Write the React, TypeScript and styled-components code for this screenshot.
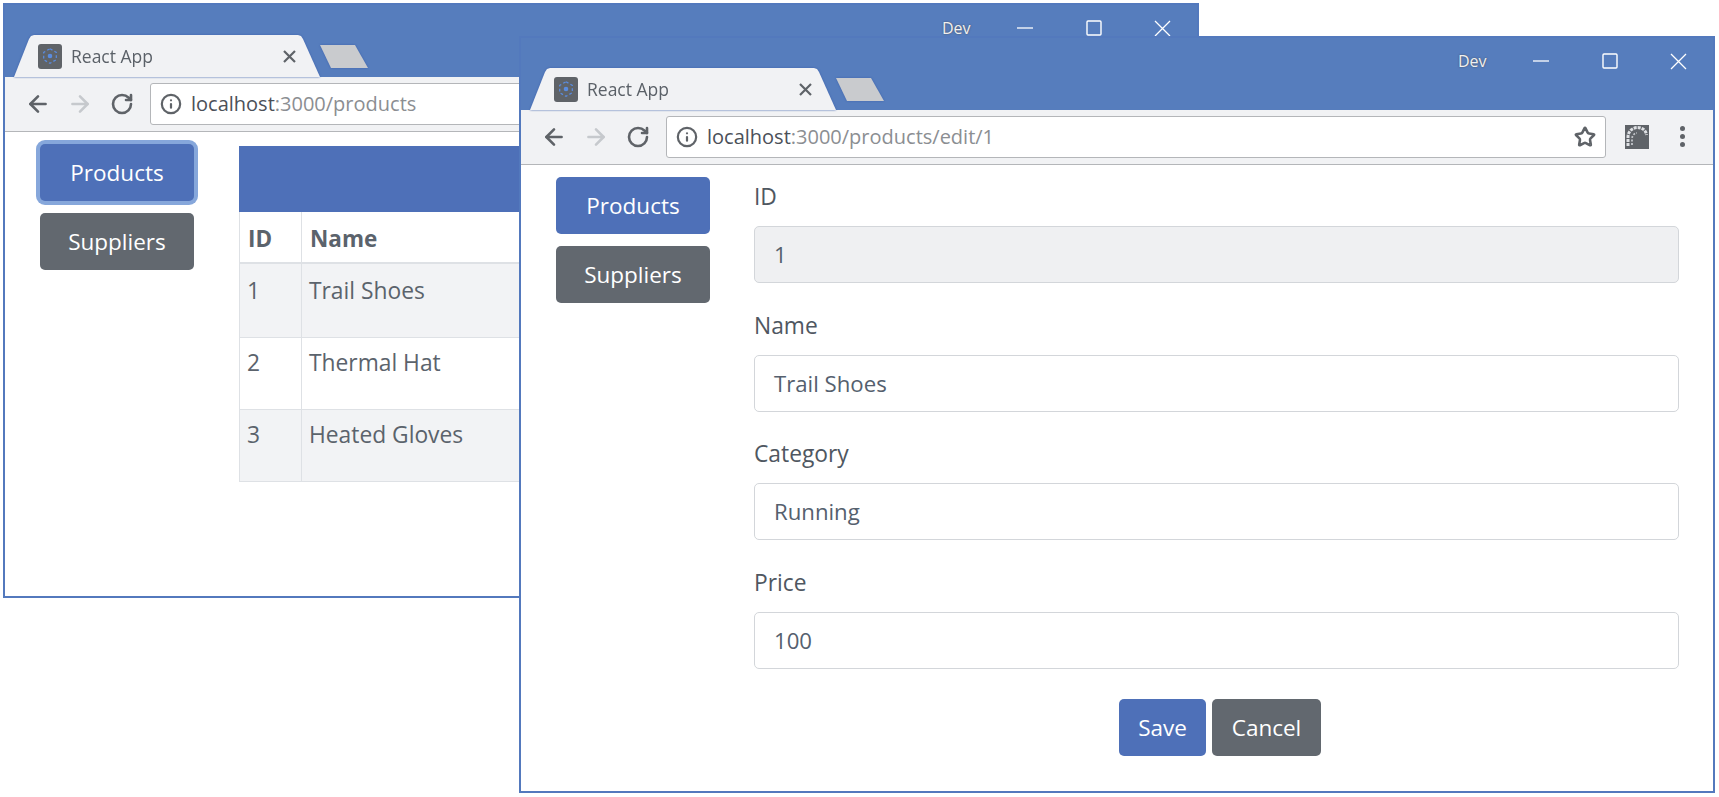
import React from 'react'
import styled, { createGlobalStyle } from 'styled-components'
import { ArrowLeft, ArrowRight, RotateCw, Info, Star } from 'lucide-react'

const GlobalStyle = createGlobalStyle`
  html, body {
    margin: 0;
    padding: 0;
    background: #fff;
    font-family: "Open Sans", "Noto Sans", "Liberation Sans", sans-serif;
  }
  * {
    box-sizing: border-box;
  }
`

const Desktop = styled.div`
  position: relative;
  width: 1719px;
  height: 797px;
  overflow: hidden;
  background: #fff;
`

const Window = styled.div<{ $left: number; $top: number; $height: number }>`
  position: absolute;
  left: ${(p) => p.$left}px;
  top: ${(p) => p.$top}px;
  width: 1196px;
  height: ${(p) => p.$height}px;
  border: 2px solid #5379bd;
  background: #fff;
  display: flex;
  flex-direction: column;
  overflow: hidden;
`

const TitleBar = styled.div`
  height: 72px;
  flex: none;
  background: #567dbd;
  display: flex;
  padding-left: 9px;
`

const TabStrip = styled.div`
  align-self: flex-end;
  display: flex;
  align-items: flex-end;
  filter: drop-shadow(0 0 1px #3e62ad);
`

const Tab = styled.div`
  width: 306px;
  height: 42px;
  background: #f1f2f4;
  clip-path: polygon(0 100%, 15px 4px, 17px 1px, 20px 0, 284px 0, 287px 1px, 289px 4px, 100% 100%);
  display: flex;
  align-items: center;
  padding: 0 24px 0 24px;
`

const Favicon = styled.div`
  width: 24px;
  height: 25px;
  border-radius: 3px;
  background: #5f6368;
  display: flex;
  align-items: center;
  justify-content: center;
`

const TabTitle = styled.span`
  margin-left: 9px;
  font-size: 17.5px;
  color: #5b6168;
`

const TabClose = styled.div`
  margin-left: auto;
  display: flex;
`

const NewTab = styled.div`
  width: 48px;
  height: 23px;
  margin-bottom: 9px;
  background: #c9cbce;
  clip-path: polygon(0 0, 35px 0, 100% 100%, 11px 100%);
`

const Controls = styled.div`
  margin-left: auto;
  padding-top: 8px;
  display: flex;
  align-items: flex-start;
`

const DevLabel = styled.span`
  width: 28px;
  margin-right: 20px;
  line-height: 30px;
  font-size: 16px;
  color: #f0f0f0;
  text-shadow: 0 0 2px #454b56;
`

const WinButton = styled.div`
  width: 69px;
  height: 30px;
  display: flex;
  align-items: center;
  justify-content: center;
`

const Toolbar = styled.div`
  height: 55px;
  flex: none;
  background: #f1f2f4;
  border-bottom: 1px solid #b4b6b9;
  display: flex;
  align-items: center;
  padding: 0 0 1px 12px;
`

const NavButton = styled.div<{ $disabled?: boolean }>`
  width: 42px;
  display: flex;
  justify-content: center;
  color: ${(p) => (p.$disabled ? '#c6c9cd' : '#5f6368')};
`

const AddressBar = styled.div`
  width: 940px;
  height: 42px;
  margin-left: 7px;
  padding: 0 9px 0 9px;
  background: #fff;
  border: 1px solid #b4b6b9;
  border-radius: 3px;
  display: flex;
  align-items: center;
  color: #5f6368;
`

const Url = styled.span`
  margin-left: 9px;
  font-size: 20px;
  color: #8b8e92;
  white-space: nowrap;
  b {
    font-weight: 400;
    color: #4b5058;
  }
`

const StarSlot = styled.div`
  margin-left: auto;
  display: flex;
`

const ExtensionSlot = styled.div`
  margin-left: 19px;
  display: flex;
`

const MenuDots = styled.div`
  margin-left: 21px;
  width: 24px;
  display: flex;
  flex-direction: column;
  align-items: center;
  gap: 3px;
  span {
    width: 5px;
    height: 5px;
    border-radius: 50%;
    background: #5f6368;
  }
`

const Content = styled.div`
  flex: 1;
  display: flex;
  padding: 12px 34px 0 35px;
  gap: 44px;
`

const NavColumn = styled.div`
  width: 154px;
  flex: none;
  display: flex;
  flex-direction: column;
  gap: 12px;
`

const Button = styled.div<{ $secondary?: boolean; $focused?: boolean; $width?: number }>`
  height: 57px;
  width: ${(p) => (p.$width ? `${p.$width}px` : 'auto')};
  border-radius: 5px;
  background: ${(p) => (p.$secondary ? '#62686f' : '#4e70b8')};
  color: #fff;
  font-size: 22.5px;
  display: flex;
  align-items: center;
  justify-content: center;
  box-shadow: ${(p) => (p.$focused ? '0 0 0 4px #86a7db' : 'none')};
`

const Main = styled.div`
  flex: 1;
  min-width: 0;
  padding-left: 1px;
`

const TableBanner = styled.div`
  height: 66px;
  margin-top: 2px;
  background: #4e70b8;
`

const Table = styled.table`
  width: 100%;
  border-collapse: collapse;
  font-size: 22.8px;
  color: #5b636c;
`

const HeadCell = styled.th<{ $width?: number }>`
  width: ${(p) => (p.$width ? `${p.$width}px` : 'auto')};
  height: 51px;
  padding: 3px 7px 0 8px;
  text-align: left;
  font-size: 22.5px;
  font-weight: 700;
  border: 1px solid #dee1e5;
  border-top: none;
  border-bottom-width: 2px;
`

const Row = styled.tr<{ $striped?: boolean; $height: number }>`
  height: ${(p) => p.$height}px;
  background: ${(p) => (p.$striped ? '#f2f3f5' : '#fff')};
`

const Cell = styled.td`
  padding: 9.5px 7px 0 7px;
  vertical-align: top;
  border: 1px solid #dee1e5;
  tr:first-child > & {
    padding-top: 11px;
  }
`

const FormMain = styled.div`
  flex: 1;
  min-width: 0;
  padding-top: 4px;
`

const FormGroup = styled.div`
  margin-bottom: 26.7px;
`

const Label = styled.div`
  height: 32px;
  line-height: 32px;
  margin-bottom: 13px;
  font-size: 22.8px;
  color: #4f5761;
`

const Input = styled.div<{ $disabled?: boolean }>`
  height: 57px;
  padding: 0 19px;
  border: 1px solid #d3d6da;
  border-radius: 5px;
  background: ${(p) => (p.$disabled ? '#eff0f2' : '#fff')};
  font-size: 22.2px;
  color: #55606e;
  display: flex;
  align-items: center;
`

const FormActions = styled.div`
  display: flex;
  justify-content: center;
  gap: 6px;
  padding: 3px 0 0 7px;
`

const MinIcon = () => (
  <svg width="16" height="16" viewBox="0 0 16 16">
    <path d="M0 8h16" stroke="#fff" strokeWidth="1.3" />
  </svg>
)

const MaxIcon = () => (
  <svg width="16" height="16" viewBox="0 0 16 16" fill="none">
    <rect x="1" y="1" width="14" height="14" rx="1" stroke="#fff" strokeWidth="1.4" />
  </svg>
)

const CloseIcon = () => (
  <svg width="17" height="17" viewBox="0 0 17 17">
    <path d="M1 1l15 15M16 1L1 16" stroke="#fff" strokeWidth="1.3" />
  </svg>
)

const ReactMark = () => (
  <svg width="18" height="18" viewBox="0 0 16 16" fill="none" stroke="#5a8ce0" strokeWidth="1.1">
    <circle cx="8" cy="8" r="1.5" fill="#5a8ce0" />
    <path d="M8 1.5l5.6 3.25v6.5L8 14.5l-5.6-3.25v-6.5z" strokeDasharray="2.5 2" />
  </svg>
)

const ExtensionIcon = () => (
  <svg width="24" height="24" viewBox="0 0 24 24">
    <rect width="24" height="24" fill="#5f6368" />
    <path d="M3 21V12C3 6 8 2.5 12.5 2.5S21 5 21.5 10" fill="none" stroke="#dfe1e4" strokeWidth="3" strokeDasharray="3 1" />
    <path d="M7 20v-6c0-3 2-6 5-6" fill="none" stroke="#c3c6ca" strokeWidth="1.8" strokeDasharray="2 1.5" />
  </svg>
)

const BrowserChrome: React.FC<{ path: string }> = ({ path }) => (
  <>
    <TitleBar>
      <TabStrip>
        <Tab>
          <Favicon>
            <ReactMark />
          </Favicon>
          <TabTitle>React App</TabTitle>
          <TabClose>
            <svg width="13" height="13" viewBox="0 0 13 13">
              <path d="M1 1l11 11M12 1L1 12" stroke="#5f6368" strokeWidth="2.2" />
            </svg>
          </TabClose>
        </Tab>
        <NewTab />
      </TabStrip>
      <Controls>
        <DevLabel>Dev</DevLabel>
        <WinButton>
          <MinIcon />
        </WinButton>
        <WinButton>
          <MaxIcon />
        </WinButton>
        <WinButton>
          <CloseIcon />
        </WinButton>
      </Controls>
    </TitleBar>
    <Toolbar>
      <NavButton>
        <ArrowLeft size={26} strokeWidth={2.4} />
      </NavButton>
      <NavButton $disabled>
        <ArrowRight size={26} strokeWidth={2.4} />
      </NavButton>
      <NavButton>
        <RotateCw size={24} strokeWidth={2.6} />
      </NavButton>
      <AddressBar>
        <Info size={22} strokeWidth={2.4} />
        <Url>
          <b>localhost</b>:3000{path}
        </Url>
        <StarSlot>
          <Star size={22} strokeWidth={2.8} />
        </StarSlot>
      </AddressBar>
      <ExtensionSlot>
        <ExtensionIcon />
      </ExtensionSlot>
      <MenuDots>
        <span />
        <span />
        <span />
      </MenuDots>
    </Toolbar>
  </>
)

const products = [
  { id: 1, name: 'Trail Shoes', height: 74 },
  { id: 2, name: 'Thermal Hat', height: 72 },
  { id: 3, name: 'Heated Gloves', height: 72 },
]

const fields = [
  { label: 'ID', value: '1', disabled: true },
  { label: 'Name', value: 'Trail Shoes' },
  { label: 'Category', value: 'Running' },
  { label: 'Price', value: '100' },
]

const App: React.FC = () => (
  <Desktop>
    <GlobalStyle />
    <Window $left={3} $top={3} $height={595}>
      <BrowserChrome path="/products" />
      <Content>
        <NavColumn>
          <Button $focused>Products</Button>
          <Button $secondary>Suppliers</Button>
        </NavColumn>
        <Main>
          <TableBanner />
          <Table>
            <thead>
              <tr>
                <HeadCell $width={62}>ID</HeadCell>
                <HeadCell>Name</HeadCell>
              </tr>
            </thead>
            <tbody>
              {products.map((product, i) => (
                <Row key={product.id} $striped={i % 2 === 0} $height={product.height}>
                  <Cell>{product.id}</Cell>
                  <Cell>{product.name}</Cell>
                </Row>
              ))}
            </tbody>
          </Table>
        </Main>
      </Content>
    </Window>
    <Window $left={519} $top={36} $height={757}>
      <BrowserChrome path="/products/edit/1" />
      <Content>
        <NavColumn>
          <Button>Products</Button>
          <Button $secondary>Suppliers</Button>
        </NavColumn>
        <FormMain>
          {fields.map((field) => (
            <FormGroup key={field.label}>
              <Label>{field.label}</Label>
              <Input $disabled={field.disabled}>{field.value}</Input>
            </FormGroup>
          ))}
          <FormActions>
            <Button $width={87}>Save</Button>
            <Button $secondary $width={109}>
              Cancel
            </Button>
          </FormActions>
        </FormMain>
      </Content>
    </Window>
  </Desktop>
)

export default App
